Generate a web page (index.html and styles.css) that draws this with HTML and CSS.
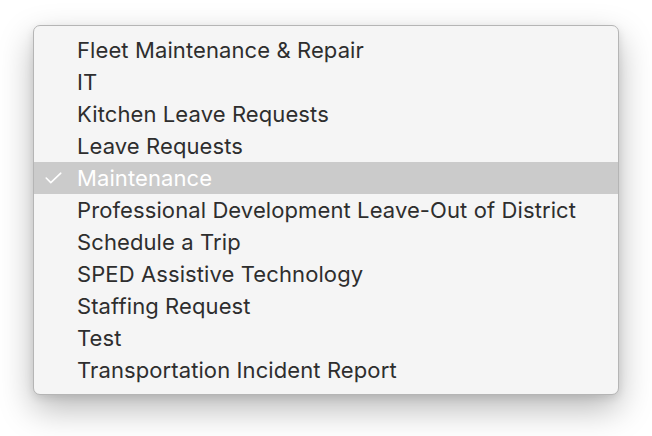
FILE: index.html
```html
<!DOCTYPE html>
<html>
<head>
<meta charset="utf-8">
<link rel="stylesheet" href="styles.css">
</head>
<body>
<ul class="menu">
  <li class="item"><span class="check"></span><span class="label">Fleet Maintenance &amp; Repair</span></li>
  <li class="item"><span class="check"></span><span class="label">IT</span></li>
  <li class="item"><span class="check"></span><span class="label">Kitchen Leave Requests</span></li>
  <li class="item"><span class="check"></span><span class="label">Leave Requests</span></li>
  <li class="item selected"><span class="check"><svg width="17" height="12" viewBox="0 0 17 12"><path d="M1.2 6 L5.8 10.6 L15.8 1.2" fill="none" stroke="#fff" stroke-width="1.6" stroke-linecap="round" stroke-linejoin="round"/></svg></span><span class="label">Maintenance</span></li>
  <li class="item"><span class="check"></span><span class="label">Professional Development Leave-Out of District</span></li>
  <li class="item"><span class="check"></span><span class="label">Schedule a Trip</span></li>
  <li class="item"><span class="check"></span><span class="label">SPED Assistive Technology</span></li>
  <li class="item"><span class="check"></span><span class="label">Staffing Request</span></li>
  <li class="item"><span class="check"></span><span class="label">Test</span></li>
  <li class="item"><span class="check"></span><span class="label">Transportation Incident Report</span></li>
</ul>
</body>
</html>
```
FILE: styles.css
```css
html, body {
  margin: 0;
  padding: 0;
  background: #ffffff;
}
html {
  height: 100%;
}
body {
  box-sizing: border-box;
  min-height: 436px;
  padding: 25px 0 0 33px;
  font-family: "Inter", "Helvetica Neue", Arial, sans-serif;
}
.menu {
  list-style: none;
  margin: 0;
  padding: 8px 0;
  width: 584px;
  background: #f5f5f5;
  border: 1px solid #b5b5b5;
  border-radius: 7px;
  box-shadow: 0 14px 34px rgba(0, 0, 0, 0.28), 0 3px 8px rgba(0, 0, 0, 0.10);
}
.item {
  display: flex;
  align-items: center;
  height: 32px;
  color: #2e2e2e;
  font-size: 22px;
  letter-spacing: 0.1px;
}
.check {
  width: 43px;
  display: flex;
  box-sizing: border-box;
  padding-left: 11px;
  justify-content: flex-start;
}
.label {
  line-height: 32px;
}
.selected {
  background: #cbcbcb;
  color: #ffffff;
}
```
